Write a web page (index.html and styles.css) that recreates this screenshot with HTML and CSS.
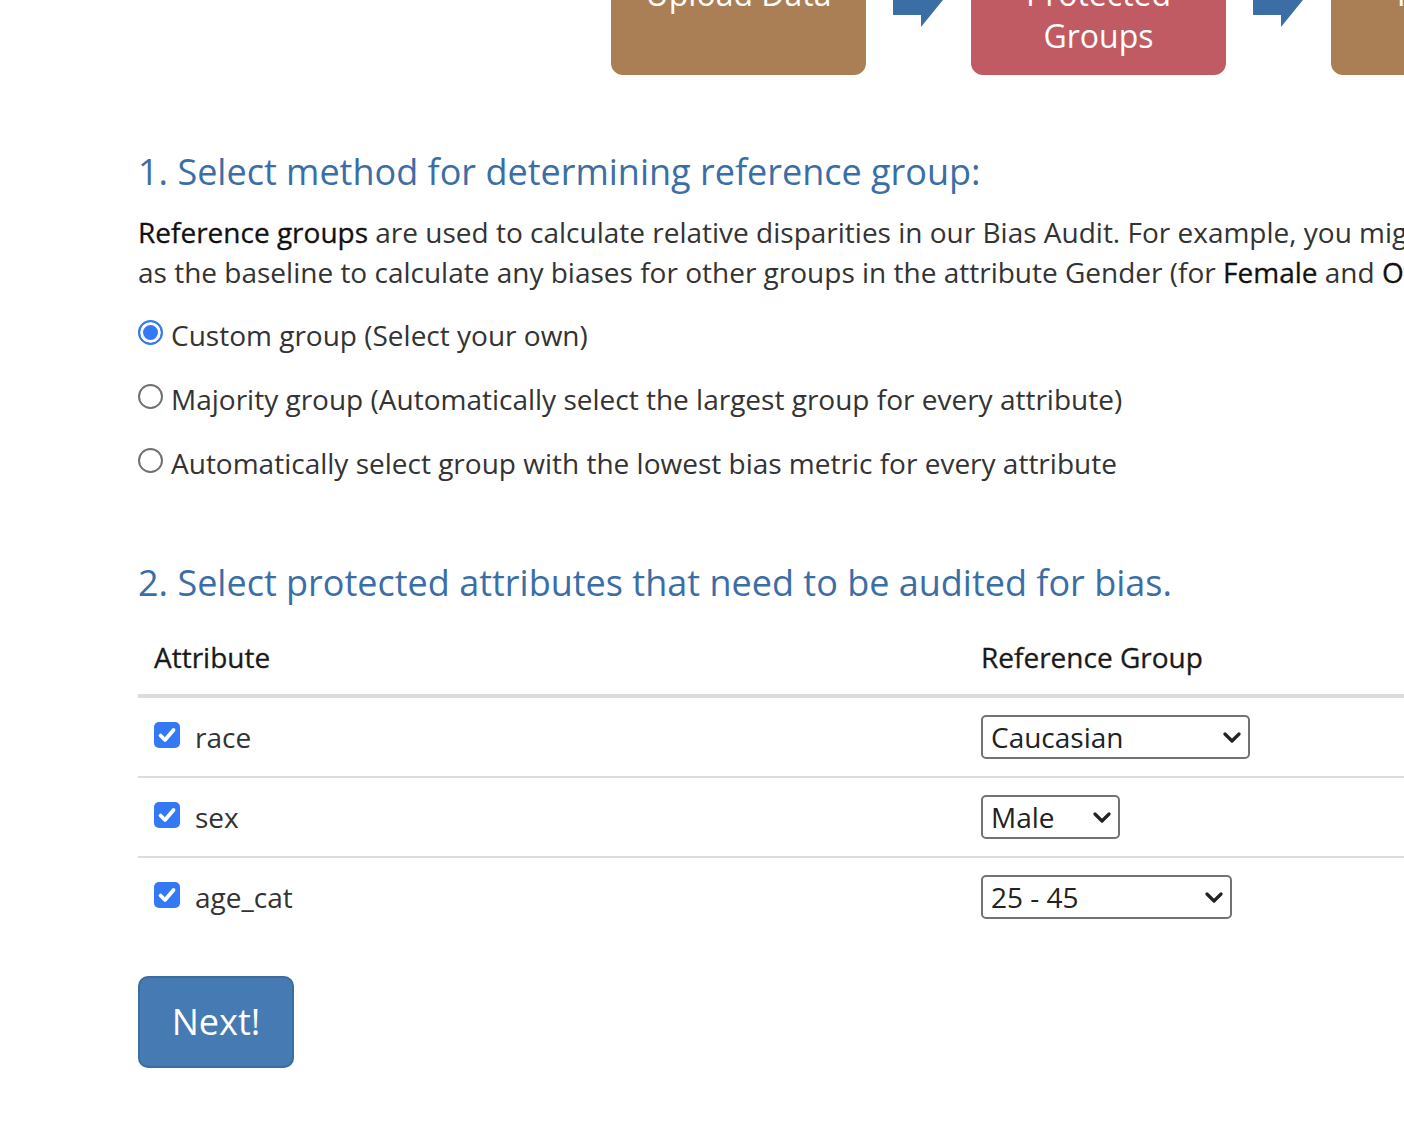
FILE: index.html
```html
<!DOCTYPE html>
<html lang="en">
<head>
<meta charset="utf-8">
<title>Protected Groups</title>
<link rel="stylesheet" href="styles.css">
</head>
<body>
<div class="page">
  <div class="steps">
    <div class="step step-brown">Upload Data</div>
    <svg class="arrow" viewBox="0 0 54 64" width="54" height="64"><polygon points="0,12 28,12 28,0 54,32 28,64 28,52 0,52"/></svg>
    <div class="step step-red">Protected Groups</div>
    <svg class="arrow" viewBox="0 0 54 64" width="54" height="64"><polygon points="0,12 28,12 28,0 54,32 28,64 28,52 0,52"/></svg>
    <div class="step step-brown">Fairness Metrics</div>
  </div>

  <div class="content">
    <h3 class="section-title first">1. Select method for determining reference group:</h3>
    <p class="intro"><b>Reference groups</b> are used to calculate relative disparities in our Bias Audit. For example, you might choose <b>Male</b><br>as the baseline to calculate any biases for other groups in the attribute Gender (for <b>Female</b> and <b>Other</b>).</p>

    <div class="radios">
      <label class="radio"><input type="radio" name="method" checked><span>Custom group (Select your own)</span></label>
      <label class="radio"><input type="radio" name="method"><span>Majority group (Automatically select the largest group for every attribute)</span></label>
      <label class="radio"><input type="radio" name="method"><span>Automatically select group with the lowest bias metric for every attribute</span></label>
    </div>

    <h3 class="section-title second">2. Select protected attributes that need to be audited for bias.</h3>

    <table class="attr-table">
      <thead>
        <tr><th class="col-attr">Attribute</th><th>Reference Group</th></tr>
      </thead>
      <tbody>
        <tr>
          <td><label class="check"><span class="box"><svg viewBox="0 0 26 26" width="26" height="26"><path d="M6.5 13.5 L11 18 L19.5 8"/></svg></span>race</label></td>
          <td><div class="select sel-race"><span>Caucasian</span><svg viewBox="0 0 18 11" width="18" height="11"><path d="M2 2 L9 9 L16 2"/></svg></div></td>
        </tr>
        <tr>
          <td><label class="check"><span class="box"><svg viewBox="0 0 26 26" width="26" height="26"><path d="M6.5 13.5 L11 18 L19.5 8"/></svg></span>sex</label></td>
          <td><div class="select sel-sex"><span>Male</span><svg viewBox="0 0 18 11" width="18" height="11"><path d="M2 2 L9 9 L16 2"/></svg></div></td>
        </tr>
        <tr>
          <td><label class="check"><span class="box"><svg viewBox="0 0 26 26" width="26" height="26"><path d="M6.5 13.5 L11 18 L19.5 8"/></svg></span>age_cat</label></td>
          <td><div class="select sel-age"><span>25 - 45</span><svg viewBox="0 0 18 11" width="18" height="11"><path d="M2 2 L9 9 L16 2"/></svg></div></td>
        </tr>
      </tbody>
    </table>

    <button class="btn-next" type="button">Next!</button>
  </div>
</div>
</body>
</html>
```

FILE: styles.css
```css
html, body {
  margin: 0;
  padding: 0;
  overflow: hidden;
  background: #fff;
}

body {
  font-family: "Open Sans", "Noto Sans", sans-serif;
  font-size: 28px;
  line-height: 40px;
  color: #333;
}

.page {
  padding-left: 138px;
  width: 1500px;
}

/* ---------- steps ---------- */
.steps {
  display: flex;
  align-items: flex-start;
  margin-top: -65px;
  margin-left: 473px;
}

.step {
  flex: 0 0 255px;
  box-sizing: border-box;
  height: 140px;
  padding: 38px 16px 0;
  border-radius: 12px;
  color: #fff;
  font-size: 32px;
  line-height: 42px;
  text-align: center;
}

.step-brown { background: #ab7f56; }
.step-red { background: #c05b63; }

.arrow {
  flex: 0 0 54px;
  margin: 28px 24px 0 27px;
  fill: #3b6ea5;
}

/* ---------- content ---------- */
.content {
  width: 1400px;
}

.section-title {
  margin: 0;
  font-size: 36px;
  line-height: 40px;
  font-weight: 400;
  color: #3b6ea6;
}

.section-title.first { margin-top: 77px; }
.section-title.second { margin-top: 80px; }

.intro {
  margin: 20px 0 0;
  white-space: nowrap;
  line-height: 40px;
}

.intro b {
  font-weight: 400;
  color: #111;
  -webkit-text-stroke: 0.3px #111;
}

.radios {
  display: flex;
  flex-direction: column;
  gap: 24px;
  margin-top: 23px;
}

.radio {
  display: flex;
  align-items: flex-start;
  gap: 8px;
  white-space: nowrap;
}

.radio input {
  appearance: none;
  -webkit-appearance: none;
  margin: 5px 0 0;
  width: 25px;
  height: 25px;
  box-sizing: border-box;
  border: 2px solid #717171;
  border-radius: 50%;
  background: #fff;
  flex: 0 0 auto;
}

.radio input:checked {
  border-color: #3478f6;
  background: #3478f6;
  box-shadow: inset 0 0 0 3px #fff;
}

/* ---------- table ---------- */
.attr-table {
  margin-top: 19px;
  width: 1400px;
  border-collapse: collapse;
}

.attr-table th {
  text-align: left;
  font-weight: 400;
  color: #1a1a1a;
  -webkit-text-stroke: 0.3px #1a1a1a;
  padding: 15px 16px 17px;
  border-bottom: 4px solid #dddddd;
}

.attr-table .col-attr { width: 795px; }

.attr-table td {
  padding: 17px 16px;
  vertical-align: middle;
  border-top: 2px solid #dddddd;
}

.attr-table tbody tr:first-child td { border-top: 0; }

.check {
  display: flex;
  align-items: center;
  gap: 15px;
}

.check .box {
  display: block;
  width: 26px;
  height: 26px;
  border-radius: 5px;
  background: #3478f6;
  margin-top: -4px;
}

.check .box svg {
  display: block;
  fill: none;
  stroke: #fff;
  stroke-width: 3.8;
  stroke-linecap: round;
  stroke-linejoin: round;
}

.select {
  display: flex;
  align-items: center;
  justify-content: space-between;
  box-sizing: border-box;
  height: 44px;
  padding: 0 7px 0 8px;
  border: 2px solid #737373;
  border-radius: 5px;
  color: #222;
  background: #fff;
}

.select svg {
  fill: none;
  stroke: #222;
  stroke-width: 3.2;
  stroke-linecap: round;
  stroke-linejoin: round;
}

.sel-race { width: 269px; }
.sel-sex { width: 139px; }
.sel-age { width: 251px; }

/* ---------- button ---------- */
.btn-next {
  display: block;
  margin-top: 40px;
  box-sizing: border-box;
  width: 156px;
  height: 92px;
  padding: 0;
  border: 2px solid #3d6d9f;
  border-radius: 10px;
  background: #467ab2;
  color: #fff;
  font-family: "Open Sans", "Noto Sans", sans-serif;
  font-size: 36px;
  line-height: 40px;
}
```
